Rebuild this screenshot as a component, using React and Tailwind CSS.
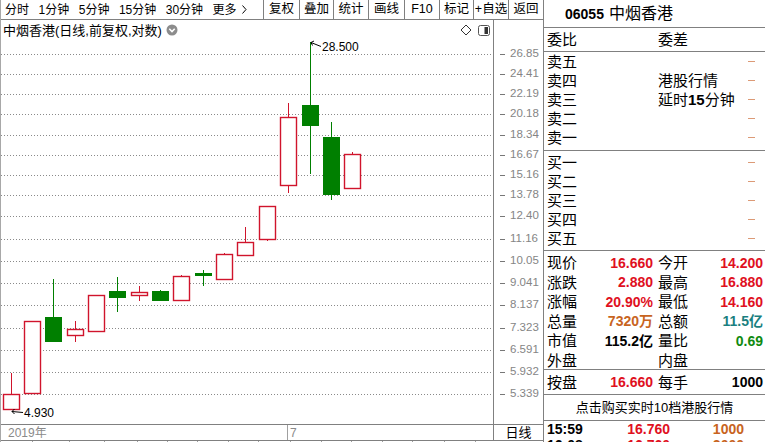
import React from "react";

const FONT = "font-['Liberation_Sans','Noto_Sans_CJK_SC',sans-serif]";
const RED = "#d0142c";
const GREEN = "#007f00";

const periods = ["分时", "1分钟", "5分钟", "15分钟", "30分钟"];
const buttons = [
  ["复权", 36],
  ["叠加", 34],
  ["统计", 35],
  ["画线", 36],
  ["F10", 35],
  ["标记", 34],
  ["+自选", 35],
  ["返回", 35],
];

const grid = [54, 74, 94, 114, 135, 155, 175, 195, 216, 239, 261, 283, 305, 328, 350, 372, 394];
const ticks = ["26.85", "24.41", "22.19", "20.18", "18.34", "16.67", "15.16", "13.78", "12.40", "11.16", "10.05", "9.041", "8.137", "7.323", "6.591", "5.932", "5.339"];

// cx, body top, body bottom, high, low, colour
const candles = [
  [11, 394, 409, 373, 409, "r"],
  [32, 321, 393, 321, 393, "r"],
  [53, 317, 341, 279, 342, "g"],
  [75, 329, 335, 321, 342, "r"],
  [96, 295, 331, 295, 331, "r"],
  [117, 291, 297, 277, 312, "g"],
  [139, 292, 295, 286, 301, "r"],
  [160, 291, 300, 290, 301, "g"],
  [181, 276, 300, 275, 300, "r"],
  [203, 273, 275, 270, 286, "g"],
  [224, 254, 279, 253, 279, "r"],
  [245, 242, 255, 227, 256, "r"],
  [267, 206, 239, 206, 241, "r"],
  [288, 117, 185, 103, 193, "r"],
  [310, 105, 125, 42, 174, "g"],
  [331, 137, 194, 122, 200, "g"],
  [352, 154, 188, 152, 188, "r"],
];

const sells = ["卖五", "卖四", "卖三", "卖二", "卖一"];
const buys = ["买一", "买二", "买三", "买四", "买五"];

const quotes = [
  ["现价", "16.660", "text-[#e0101e]", "今开", "14.200", "text-[#e0101e]"],
  ["涨跌", "2.880", "text-[#e0101e]", "最高", "16.880", "text-[#e0101e]"],
  ["涨幅", "20.90%", "text-[#e0101e]", "最低", "14.160", "text-[#e0101e]"],
  ["总量", "7320万", "text-[#c8641e]", "总额", "11.5亿", "text-[#1a7f80]"],
  ["市值", "115.2亿", "text-black", "量比", "0.69", "text-[#108a10]"],
  ["外盘", "", "text-black", "内盘", "", "text-black"],
];

const trades = [
  ["15:59", "16.760", "1000", "h-[15px]"],
  ["16:08", "16.760", "2000", "h-[18px]"],
];

const bottomCells = [32, 37, 35, 33, 30, 30, 31, 30, 32, 31, 30, 31, 30, 32, 31];

function Dash() {
  return <div className="ml-auto mr-[10px] w-[7px] h-px bg-[#dc9a76]" />;
}

function Chart() {
  return (
    <svg width="492" height="384" viewBox="1 40 492 384" className="block">
      {grid.map((y) => (
        <line key={y} x1="1" x2="493" y1={y + 0.5} y2={y + 0.5} stroke="#8a8a8a" strokeDasharray="1 2" />
      ))}
      {candles.map(([cx, bt, bb, hi, lo, c], i) => {
        const col = c === "r" ? RED : GREEN;
        const x = cx + 0.5;
        return (
          <g key={i}>
            {hi < bt && <line x1={x} x2={x} y1={hi} y2={bt} stroke={col} />}
            {lo > bb && <line x1={x} x2={x} y1={bb} y2={lo} stroke={col} />}
            <rect
              x={cx - 7.5}
              y={bt + 0.5}
              width="16"
              height={Math.max(bb - bt, 1)}
              fill={c === "r" ? "#fff" : col}
              stroke={col}
              strokeWidth={c === "r" ? 1.4 : 1}
            />
          </g>
        );
      })}
      <path d="M311 42.5 L321 46.5 M311 42.5 L314 41 M311 42.5 L312.5 45.5" stroke="#000" fill="none" />
      <text x="322" y="50.5" fontSize="12" fill="#000" fontFamily="Liberation Sans, sans-serif">28.500</text>
      <path d="M12 411.5 L23 412.5 M12 411.5 L14.5 409 M12 411.5 L14.5 414" stroke="#000" fill="none" />
      <text x="24" y="416.5" fontSize="12" fill="#000" fontFamily="Liberation Sans, sans-serif">4.930</text>
    </svg>
  );
}

export default function App() {
  return (
    <div className={`w-[765px] h-[442px] overflow-hidden flex bg-white text-black ${FONT}`}>
      {/* left: toolbar + chart */}
      <div className="w-[543px] h-full flex flex-col border-l border-[#a8a8a8]">
        <div className="h-[20px] flex border-b border-[#808080] text-[12px] leading-none">
          <div className="flex items-center gap-[9.5px] pl-[4px] w-[262px]">
            {periods.map((p) => (
              <span key={p}>{p}</span>
            ))}
            <span className="flex items-center gap-[5px]">
              更多
              <svg width="5" height="9" viewBox="0 0 5 9">
                <path d="M0.5 0.5 L4 4.5 L0.5 8.5" stroke="#000" fill="none" />
              </svg>
            </span>
          </div>
          {buttons.map(([b, w]) => (
            <div
              key={b}
              style={{ width: w }}
              className="flex items-center justify-center border-l border-[#808080] text-[12.5px]"
            >
              {b}
            </div>
          ))}
        </div>

        <div className="flex h-[404px]">
          <div className="w-[492px] flex flex-col">
            <div className="h-[20px] flex items-center pl-[2px] text-[13px] leading-none">
              <span>中烟香港(日线,前复权,对数)</span>
              <svg width="12" height="12" viewBox="0 0 12 12" className="ml-[4px]">
                <circle cx="6" cy="6" r="5.5" fill="#8c8c8c" />
                <path d="M3.3 4.8 L6 7.5 L8.7 4.8" stroke="#fff" strokeWidth="1.6" fill="none" />
              </svg>
              <svg width="12" height="12" viewBox="0 0 12 12" className="ml-auto">
                <path d="M6 1 L11 6 L6 11 L1 6 Z" stroke="#333" fill="none" />
              </svg>
              <svg width="12" height="11" viewBox="0 0 12 11" className="ml-[6px] mr-[3px]">
                <rect x="0.5" y="0.5" width="11" height="10" rx="2" stroke="#555" fill="#fff" />
                <rect x="6.5" y="2" width="3.5" height="7" fill="#333" />
              </svg>
            </div>
            <Chart />
          </div>
          <div className="w-[50px] relative border-l border-[#808080]">
            {grid.map((y, i) => (
              <div
                key={y}
                style={{ top: y - 20 }}
                className="absolute left-0 -translate-y-1/2 flex items-center h-[12px]"
              >
                <div className="ml-[6px] w-[5px] h-px bg-[#777]" />
                <span className="ml-[5px] text-[11.5px] leading-none text-[#858585]">{ticks[i]}</span>
              </div>
            ))}
          </div>
        </div>

        <div className="h-[17px] flex border-t border-b border-[#808080] text-[12px] leading-none">
          <div className="w-[286px] flex items-center pl-[7px] text-[#8a8a8a]">2019年</div>
          <div className="w-[206px] flex items-center pl-[2px] border-l border-[#a0a0a0] text-[#8a8a8a]">7</div>
          <div className="w-[50px] flex items-center justify-center border-l border-[#808080] text-[13px]">日线</div>
        </div>
        <div className="flex-1 flex">
          {bottomCells.map((w, i) => (
            <div key={i} style={{ width: w }} className="border-r border-[#a0a0a0]" />
          ))}
        </div>
      </div>

      {/* right: quote panel */}
      <div className="w-[222px] h-full flex flex-col border-l border-[#808080] text-[15px]">
        <div className="h-[28px] shrink-0 flex items-center pl-[21px] border-b border-[#808080]">
          <span className="font-bold text-[14px] leading-none">06055</span>
          <span className="ml-[5px] text-[16px] leading-none">中烟香港</span>
        </div>
        <div className="h-[24px] shrink-0 flex items-center border-b border-[#808080] leading-none">
          <span className="w-[114px] pl-[3px]">委比</span>
          <span>委差</span>
        </div>
        <div className="h-[99px] shrink-0 border-b border-[#808080]">
          {sells.map((s, i) => (
            <div key={s} className="h-[19px] flex items-center leading-none">
              <span className="w-[114px] pl-[3px]">{s}</span>
              {i === 1 && <span>港股行情</span>}
              {i === 2 && (
                <span>
                  延时<b className="font-bold">15</b>分钟
                </span>
              )}
              <Dash />
            </div>
          ))}
        </div>
        <div className="h-[100px] shrink-0 pt-[2px] border-b border-[#808080]">
          {buys.map((s) => (
            <div key={s} className="h-[19px] flex items-center leading-none">
              <span className="w-[114px] pl-[3px]">{s}</span>
              <Dash />
            </div>
          ))}
        </div>
        <div className="h-[119px] shrink-0 pt-[2px] border-b border-[#808080]">
          {quotes.map(([l1, v1, c1, l2, v2, c2]) => (
            <div key={l1} className="h-[19.5px] flex items-center leading-none">
              <div className="w-[111px] flex items-center pl-[3px] pr-[2px]">
                <span>{l1}</span>
                <span className={`ml-auto font-bold text-[14px] ${c1}`}>{v1}</span>
              </div>
              <div className="w-[110px] flex items-center pl-[3px] pr-[2px]">
                <span>{l2}</span>
                <span className={`ml-auto font-bold text-[14px] ${c2}`}>{v2}</span>
              </div>
            </div>
          ))}
        </div>
        <div className="h-[25px] shrink-0 flex items-center border-b border-[#808080] leading-none">
          <div className="w-[111px] flex items-center pl-[3px] pr-[2px]">
            <span>按盘</span>
            <span className="ml-auto font-bold text-[14px] text-[#e0101e]">16.660</span>
          </div>
          <div className="w-[110px] flex items-center pl-[3px] pr-[2px]">
            <span>每手</span>
            <span className="ml-auto font-bold text-[14px]">1000</span>
          </div>
        </div>
        <div className="h-[26px] shrink-0 flex items-center justify-center border-b border-[#808080] text-[13px] leading-none">
          点击购买实时10档港股行情
        </div>
        {trades.map(([t, p, v, h]) => (
          <div key={t} className={`${h} shrink-0 flex items-center font-bold text-[14px] leading-none`}>
            <span className="w-[80px] pl-[3px]">{t}</span>
            <span className="w-[46px] text-right text-[#e0101e]">{p}</span>
            <span className="w-[74px] text-right text-[#c8641e]">{v}</span>
          </div>
        ))}
      </div>
    </div>
  );
}
